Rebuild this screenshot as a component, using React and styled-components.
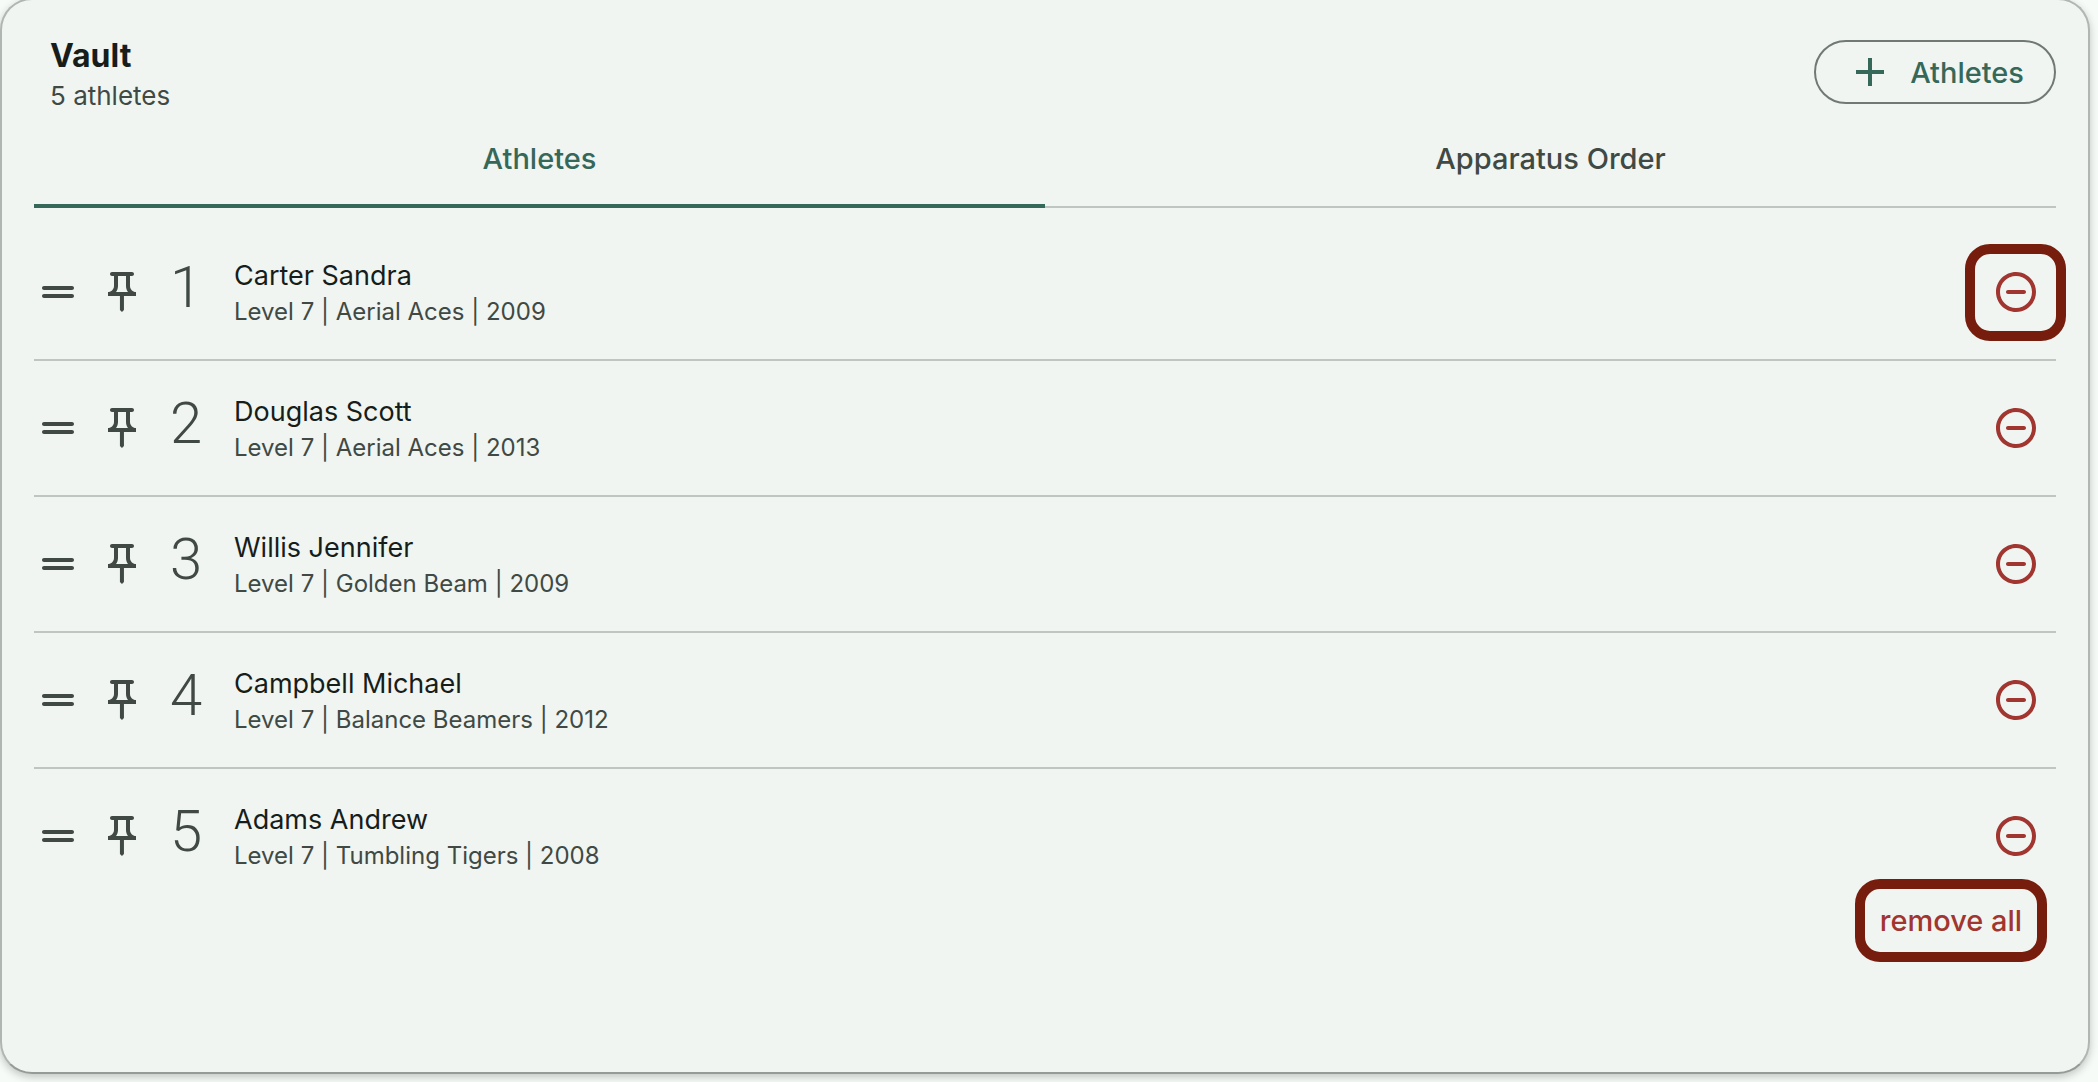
import { useState } from 'react';
import styled, { createGlobalStyle } from 'styled-components';

const GlobalStyle = createGlobalStyle`
  * {
    box-sizing: border-box;
  }

  body {
    margin: 0;
    background: #f6fbf8;
    font-family: Inter, 'Liberation Sans', sans-serif;
    color: #171d1a;
  }

  button {
    font-family: inherit;
    cursor: pointer;
  }
`;

const Card = styled.main`
  display: flex;
  flex-direction: column;
  min-height: calc(100vh - 6px);
  margin: -2px 8px 8px 0;
  padding: 40px 32px;
  background: #f0f5f1;
  border: 2px solid #b0b7b3;
  border-bottom-color: #959c98;
  border-radius: 32px;
  box-shadow: 0 3px 8px rgba(0, 0, 0, 0.22);
`;

const Header = styled.header`
  display: flex;
  align-items: flex-start;
  justify-content: space-between;
`;

const Heading = styled.div`
  padding-left: 16px;
`;

const Title = styled.h1`
  margin: 0;
  font-size: 32px;
  line-height: 32px;
  font-weight: 700;
`;

const Count = styled.p`
  margin: 6px 0 0;
  font-size: 26px;
  line-height: 36px;
  color: #404944;
`;

const AddButton = styled.button`
  display: flex;
  align-items: center;
  gap: 16px;
  height: 64px;
  padding: 0 30px;
  border: 2px solid #707974;
  border-radius: 32px;
  background: transparent;
  color: #36685a;
  font-size: 29px;
  font-weight: 500;
`;

const Tabs = styled.div`
  display: flex;
  height: 94px;
`;

const Tab = styled.button`
  flex: 1;
  padding: 0 0 6px;
  border: 0;
  background: transparent;
  box-shadow: inset 0 ${({ $active }) => ($active ? '-4px #36685a' : '-2px #bfc6c1')};
  color: ${({ $active }) => ($active ? '#36685a' : '#404944')};
  font-size: 29px;
  font-weight: 500;
`;

const List = styled.ul`
  margin: 17px 0 0;
  padding: 0;
  list-style: none;
`;

const Row = styled.li`
  display: flex;
  align-items: center;
  gap: 16px;
  height: 136px;
  border-bottom: 2px solid #bfc6c1;

  &:last-child {
    height: 134px;
    border-bottom: 0;
  }
`;

const IconButton = styled.button`
  display: flex;
  padding: 0;
  border: 0;
  background: transparent;
  color: #404944;
`;

const Position = styled.span`
  width: 48px;
  padding-bottom: 10px;
  font-family: Roboto, sans-serif;
  font-size: 58px;
  line-height: 64px;
  font-weight: 350;
  text-align: center;
  color: #404944;
`;

const Details = styled.div`
  flex: 1;
  padding: 4px 0 0 8px;
`;

const Name = styled.div`
  font-size: 27px;
  line-height: 36px;
`;

const Meta = styled.div`
  font-size: 24px;
  line-height: 36px;
  color: #404944;
`;

const RemoveButton = styled.button`
  position: relative;
  display: flex;
  align-items: center;
  justify-content: center;
  width: 80px;
  height: 80px;
  padding: 0;
  border: 0;
  background: transparent;
  color: #a13530;
`;

const Highlight = styled.span`
  position: absolute;
  inset: -8px -10px -9px -11px;
  border: 10px solid #771d0e;
  border-radius: 25px;
  pointer-events: none;
`;

const Footer = styled.footer`
  display: flex;
  justify-content: flex-end;
  margin-top: -24px;
  padding-right: 9px;
`;

const RemoveAll = styled.button`
  width: 192px;
  height: 83px;
  padding: 0;
  border: 10px solid #771d0e;
  border-radius: 25px;
  background: transparent;
  color: #a13530;
  font-size: 29px;
  font-weight: 500;
`;

const Svg = styled.svg`
  width: 48px;
  height: 48px;
  fill: currentColor;
`;

const icons = {
  plus: 'M19 13h-6v6h-2v-6H5v-2h6V5h2v6h6z',
  drag: 'M19 9H5c-.55 0-1 .45-1 1s.45 1 1 1h14c.55 0 1-.45 1-1s-.45-1-1-1zM5 15h14c.55 0 1-.45 1-1s-.45-1-1-1H5c-.55 0-1 .45-1 1s.45 1 1 1z',
  pin: 'M14 4v5c0 1.12.37 2.16 1 3H9c.65-.86 1-1.9 1-3V4h4m3-2H7c-.55 0-1 .45-1 1s.45 1 1 1h1v5c0 1.66-1.34 3-3 3v2h5.97v7l1 1 1-1v-7H19v-2c-1.66 0-3-1.34-3-3V4h1c.55 0 1-.45 1-1s-.45-1-1-1z',
  remove: 'M8 11c-.55 0-1 .45-1 1s.45 1 1 1h8c.55 0 1-.45 1-1s-.45-1-1-1H8zm4-9C6.48 2 2 6.48 2 12s4.48 10 10 10 10-4.48 10-10S17.52 2 12 2zm0 18c-4.41 0-8-3.59-8-8s3.59-8 8-8 8 3.59 8 8-3.59 8-8 8z',
};

const Icon = ({ name }) => (
  <Svg viewBox="0 0 24 24" aria-hidden="true">
    <path d={icons[name]} />
  </Svg>
);

const athletes = [
  { name: 'Carter Sandra', level: 'Level 7', club: 'Aerial Aces', year: 2009, highlighted: true },
  { name: 'Douglas Scott', level: 'Level 7', club: 'Aerial Aces', year: 2013 },
  { name: 'Willis Jennifer', level: 'Level 7', club: 'Golden Beam', year: 2009 },
  { name: 'Campbell Michael', level: 'Level 7', club: 'Balance Beamers', year: 2012 },
  { name: 'Adams Andrew', level: 'Level 7', club: 'Tumbling Tigers', year: 2008 },
];

const tabs = ['Athletes', 'Apparatus Order'];

export default function App() {
  const [activeTab, setActiveTab] = useState('Athletes');

  return (
    <>
      <GlobalStyle />
      <Card>
        <Header>
          <Heading>
            <Title>Vault</Title>
            <Count>{athletes.length} athletes</Count>
          </Heading>
          <AddButton type="button">
            <Icon name="plus" />
            Athletes
          </AddButton>
        </Header>

        <Tabs role="tablist">
          {tabs.map((tab) => (
            <Tab
              key={tab}
              type="button"
              role="tab"
              aria-selected={tab === activeTab}
              $active={tab === activeTab}
              onClick={() => setActiveTab(tab)}
            >
              {tab}
            </Tab>
          ))}
        </Tabs>

        <List>
          {athletes.map((athlete, index) => (
            <Row key={athlete.name}>
              <IconButton type="button" aria-label={`Move ${athlete.name}`}>
                <Icon name="drag" />
              </IconButton>
              <IconButton type="button" aria-label={`Pin ${athlete.name}`}>
                <Icon name="pin" />
              </IconButton>
              <Position>{index + 1}</Position>
              <Details>
                <Name>{athlete.name}</Name>
                <Meta>
                  {athlete.level} | {athlete.club} | {athlete.year}
                </Meta>
              </Details>
              <RemoveButton type="button" aria-label={`Remove ${athlete.name}`}>
                <Icon name="remove" />
                {athlete.highlighted && <Highlight />}
              </RemoveButton>
            </Row>
          ))}
        </List>

        <Footer>
          <RemoveAll type="button">remove all</RemoveAll>
        </Footer>
      </Card>
    </>
  );
}
